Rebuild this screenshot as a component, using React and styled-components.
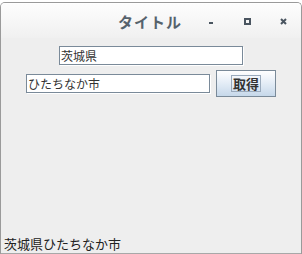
import React from "react";
import styled, { createGlobalStyle } from "styled-components";

const GlobalStyle = createGlobalStyle`
  html, body {
    margin: 0;
    padding: 0;
    background: #ffffff;
  }
  body {
    font-family: "Noto Sans CJK JP", "Noto Sans", sans-serif;
  }
`;

const Window = styled.div`
  box-sizing: border-box;
  width: 302px;
  height: 253px;
  margin-top: 2px;
  display: flex;
  flex-direction: column;
  border: 1px solid #9a9a9a;
  border-bottom: 2px solid #a8a8a8;
  border-radius: 5px 5px 0 0;
  background: #eeeeee;
  overflow: hidden;
`;

const TitleBar = styled.div`
  height: 34px;
  flex-shrink: 0;
  display: flex;
  align-items: center;
  position: relative;
  background: linear-gradient(#fdfdfd, #f0f0f0);
  border-top: 1px solid #ffffff;
`;

const Title = styled.span`
  flex: 1;
  text-align: center;
  padding-right: 2px;
  font-family: "Noto Sans CJK JP", sans-serif;
  font-weight: bold;
  font-size: 15px;
  color: #56626c;
  letter-spacing: 1px;
`;

const Controls = styled.div`
  position: absolute;
  right: 0;
  top: 0;
  height: 100%;
  display: flex;
  align-items: center;
`;

const ControlButton = styled.div`
  width: 36px;
  height: 100%;
  display: flex;
  align-items: center;
  justify-content: center;
`;

const Content = styled.div`
  flex: 1;
  display: flex;
  flex-direction: column;
  padding-top: 8px;
`;

const Row = styled.div`
  display: flex;
  justify-content: center;
  align-items: center;
  gap: 6px;
  margin-bottom: ${(p) => p.gap || 0}px;
`;

const Field = styled.div`
  box-sizing: border-box;
  width: 184px;
  height: 19px;
  background: #ffffff;
  border: 1px solid #7a8a99;
  box-shadow: 1px 1px 0 #ffffff;
  padding-left: 1px;
  font-size: 12px;
  line-height: 17px;
  color: #333333;
  white-space: nowrap;
`;

const Button = styled.div`
  box-sizing: border-box;
  width: 60px;
  height: 27px;
  display: flex;
  align-items: center;
  justify-content: center;
  border: 1px solid #7a8a99;
  background: linear-gradient(#ffffff 0%, #e6eef7 45%, #c6d8ea 100%);
`;

const ButtonText = styled.span`
  box-sizing: border-box;
  border: 1px solid #9aaabc;
  padding: 0 1px;
  font-size: 13px;
  font-weight: bold;
  line-height: 15px;
  color: #333333;
`;

const Spacer = styled.div`
  flex: 1;
`;

const StatusLabel = styled.div`
  padding-left: 3px;
  height: 17px;
  font-size: 13px;
  line-height: 16px;
  color: #222222;
`;

export default function App() {
  return (
    <>
      <GlobalStyle />
      <Window>
        <TitleBar>
          <Title>タイトル</Title>
          <Controls>
            <ControlButton>
              <svg width="6" height="6" viewBox="0 0 6 6">
                <rect x="1" y="4" width="4" height="2" fill="#4a5560" />
              </svg>
            </ControlButton>
            <ControlButton>
              <svg width="7" height="7" viewBox="0 0 7 7">
                <rect x="1" y="1" width="5" height="5" fill="none" stroke="#4a5560" strokeWidth="2" />
              </svg>
            </ControlButton>
            <ControlButton>
              <svg width="7" height="7" viewBox="0 0 7 7">
                <path d="M1 1 L6 6 M6 1 L1 6" stroke="#4a5560" strokeWidth="2" />
              </svg>
            </ControlButton>
          </Controls>
        </TitleBar>
        <Content>
          <Row gap={5}>
            <Field>茨城県</Field>
          </Row>
          <Row>
            <Field>ひたちなか市</Field>
            <Button>
              <ButtonText>取得</ButtonText>
            </Button>
          </Row>
          <Spacer />
          <StatusLabel>茨城県ひたちなか市</StatusLabel>
        </Content>
      </Window>
    </>
  );
}
